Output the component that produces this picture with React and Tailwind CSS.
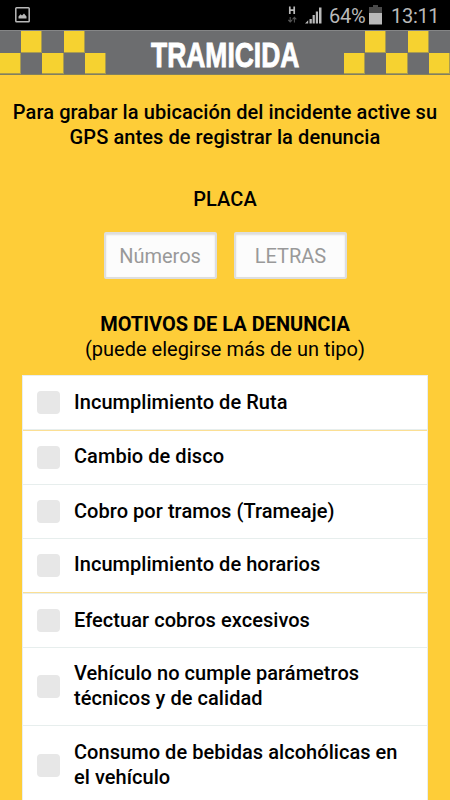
import { useState } from "react"

const motivos = [
    { label: "Incumplimiento de Ruta", className: "h-[55px]", text: "pb-0", line: "h-[2px] bg-[#fbdf94] border-t border-[#e7eeed]" },
    { label: "Cambio de disco", className: "h-[54px]", text: "pb-[2px]", line: "h-px bg-[#e7eeed]" },
    { label: "Cobro por tramos (Trameaje)", className: "h-[54px]", text: "pb-px", line: "h-px bg-[#e7eeed]" },
    { label: "Incumplimiento de horarios", className: "h-[55px]", text: "pb-[2px]", line: "h-[2px] bg-[#e7eeed] border-t border-[#fbdf94]" },
    { label: "Efectuar cobros excesivos", className: "h-[54px]", text: "pb-px", line: "h-px bg-[#e7eeed]" },
    { label: "Vehículo no cumple parámetros técnicos y de calidad", className: "h-[78px]", text: "pb-px", line: "h-px bg-[#e7eeed]" },
    { label: "Consumo de bebidas alcohólicas en el vehículo", className: "h-[79px]", text: "pb-0", line: "h-px bg-[#e7eeed]" },
]

const StatusBar = () => (
    <div className="h-[30px] bg-black flex items-center justify-between pl-[15px] pr-[12px] text-[#b9b9b9]">
        <svg className="w-[15px] h-[16px]" viewBox="0 0 15 16" fill="none">
            <rect x="0.8" y="0.8" width="13.4" height="14" rx="0.8" stroke="currentColor" strokeWidth="1.5" />
            <path d="M3.5 11.5V9.5L5.5 7.2L7 8.6L9 6.5L11.5 9.5V11.5Z" fill="currentColor" />
        </svg>
        <div className="flex items-center">
            <svg className="w-[9px] h-[18px] mr-[8px]" viewBox="0 0 9 18" fill="none">
                <path d="M1.8 0.5V8M6.2 0.5V8M1.8 4.2H6.2" stroke="currentColor" strokeWidth="1.7" />
                <path d="M2.2 11V16M0.3 14L2.2 16L4.1 14M6.4 16.5V11.5M4.5 13.3L6.4 11.3L8.3 13.3" stroke="#555" strokeWidth="1.1" />
            </svg>
            <svg className="w-[17px] h-[17px] mr-[7px]" viewBox="0 0 17 17" fill="currentColor">
                <path d="M0 16.5L3.2 13.3V16.5ZM4.5 12H6.8V16.5H4.5ZM7.6 8H9.8V16.5H7.6ZM10.8 4.5H13V16.5H10.8ZM14 0.5H16.5V16.5H14Z" />
            </svg>
            <span className="pt-px text-[20px] leading-[30px] w-[40px] whitespace-nowrap tracking-[-0.2px]">64%</span>
            <svg className="w-[13px] h-[20px] mr-[9px]" viewBox="0 0 13 20">
                <path d="M4 0H9V2H13V8H0V2H4Z" fill="#4a4a4a" />
                <path d="M0 8H13V19.5H0Z" fill="currentColor" />
            </svg>
            <span className="pt-px text-[20px] leading-[30px] w-[47px] whitespace-nowrap tracking-[-0.3px]">13:11</span>
        </div>
    </div>
)

const Checker = ({ cells }) => (
    <div className="grid grid-cols-5 grid-rows-2 w-[106px] h-[43px]">
        {cells.map((on, k) => (
            <span key={k} className={on ? "bg-[#f6d230] border-r border-b border-[#a99b50]" : ""} />
        ))}
    </div>
)

const pattern = [0, 1, 0, 1, 0, 1, 0, 1, 0, 1]

const Header = () => (
    <header className="h-[45px] bg-[#6c6d6f] border-t border-b border-t-[#858687] border-b-[#81805f] flex justify-between overflow-hidden">
        <Checker cells={pattern} />
        <h1 className="flex-1 flex justify-center font-['Liberation_Sans'] font-bold text-white text-[35px] leading-[47px]">
            <span className="scale-x-[0.755] origin-center [-webkit-text-stroke:0.9px_white]">TRAMICIDA</span>
        </h1>
        <Checker cells={pattern} />
    </header>
)

const Motivo = ({ motivo }) => {
    const [checked, setChecked] = useState(false)

    return (
        <li className={`${motivo.className} flex flex-col`}>
            <label className="flex-1 flex items-center pl-[14px] pr-4">
                <input
                    type="checkbox"
                    checked={checked}
                    onChange={() => setChecked(!checked)}
                    className="appearance-none shrink-0 w-[23px] h-[23px] rounded-[4px] bg-[#e7e7e7] checked:bg-[#fecd38]"
                />
                <span className={`${motivo.text} ml-[14px] font-medium text-[20px] leading-[25px] tracking-[0.05px]`}>{motivo.label}</span>
            </label>
            <span className={`shrink-0 ${motivo.line}`} />
        </li>
    )
}

const App = () => (
    <div className="w-full h-[800px] overflow-hidden bg-[#fecd38] text-black font-[Roboto,sans-serif]">
        <StatusBar />
        <Header />
        <main className="pt-[25px]">
            <p className="text-center font-medium text-[20px] leading-[25px] tracking-[0.08px]">
                Para grabar la ubicación del incidente active su
                <br />
                GPS antes de registrar la denuncia
            </p>
            <h2 className="mt-[37px] text-center font-medium text-[20px] leading-[25px] tracking-[0.1px]">PLACA</h2>
            <div className="mt-[20px] flex justify-center gap-[17px]">
                <input
                    placeholder="Números"
                    className="w-[113px] h-[47px] bg-[#fcfcfc] border-2 border-[#dedede] shadow-[inset_0_1px_2px_#ddd] rounded-[2px] text-center text-[20px] placeholder:text-[#999]"
                />
                <input
                    placeholder="LETRAS"
                    className="w-[113px] h-[47px] pl-px bg-[#fcfcfc] border-2 border-[#dedede] shadow-[inset_0_1px_2px_#ddd] rounded-[2px] text-center text-[20px] placeholder:text-[#999]"
                />
            </div>
            <h2 className="mt-[33px] text-center font-bold text-[20px] leading-[25px]">MOTIVOS DE LA DENUNCIA</h2>
            <p className="text-center text-[20px] leading-[25px]">(puede elegirse más de un tipo)</p>
            <ul className="mt-[13px] mx-[22px] bg-white border border-[#e9eeee]">
                {motivos.map((motivo) => (
                    <Motivo key={motivo.label} motivo={motivo} />
                ))}
            </ul>
        </main>
    </div>
)

export default App
